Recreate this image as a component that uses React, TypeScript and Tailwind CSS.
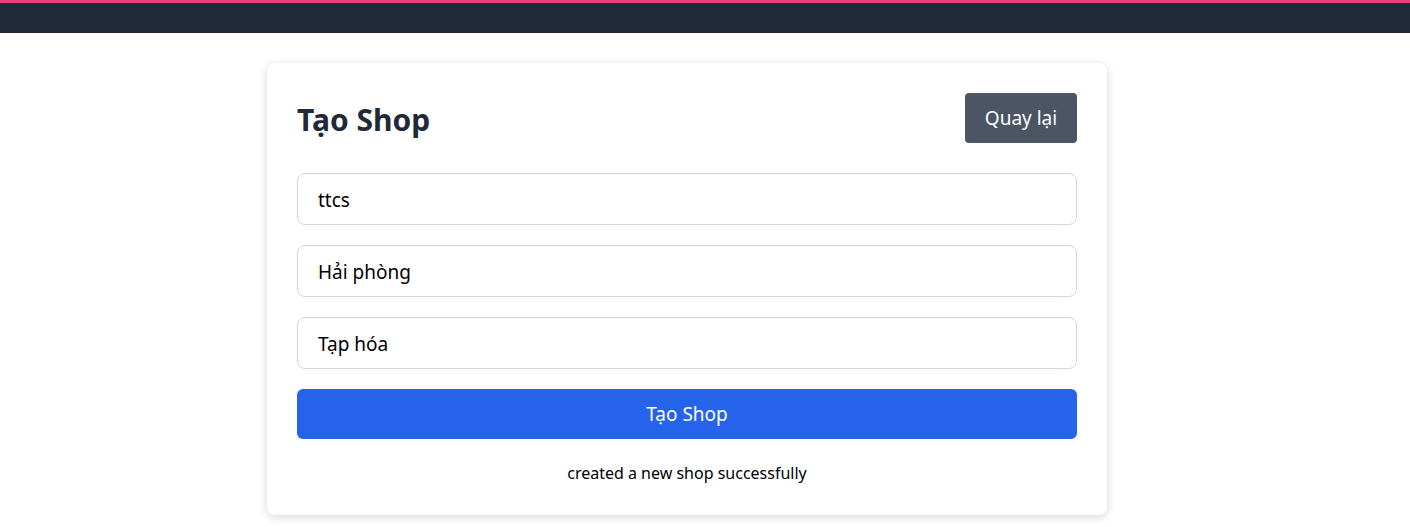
export default function App() {
  return (
    <div className="min-h-screen bg-white font-['Noto_Sans','Open_Sans',sans-serif] text-black">
      {/* ---------- Top bar ---------- */}
      <div className="h-[33px] border-t-[3px] border-[#ec407a] bg-[#1f2937]" />

      {/* ---------- Card ---------- */}
      <div className="flex justify-center pr-[36px] pt-[30px]">
        <div className="w-[840px] rounded-lg bg-white px-[30px] pt-[30px] pb-[30px] shadow-[0_2px_10px_rgba(0,0,0,0.16)]">
          <div className="flex h-[50px] items-center justify-between">
            <h1 className="pt-[2px] text-[30px] font-bold text-[#1f2937]">Tạo Shop</h1>
            <button
              type="button"
              className="h-[50px] w-[112px] rounded bg-[#4b5563] text-[19px] text-white"
            >
              Quay lại
            </button>
          </div>

          <form className="mt-[30px] flex flex-col gap-5" onSubmit={(e) => e.preventDefault()}>
            <input
              defaultValue="ttcs"
              className="h-[52px] w-full rounded-lg border border-[#d1d5db] px-5 pt-[2px] text-[19px] outline-none"
            />
            <input
              defaultValue="Hải phòng"
              className="h-[52px] w-full rounded-lg border border-[#d1d5db] px-5 pt-[2px] text-[19px] outline-none"
            />
            <input
              defaultValue="Tạp hóa"
              className="h-[52px] w-full rounded-lg border border-[#d1d5db] px-5 pt-[2px] text-[19px] outline-none"
            />
            <button
              type="submit"
              className="h-[50px] w-full rounded-md bg-[#2563eb] pt-[1px] text-[19px] text-white"
            >
              Tạo Shop
            </button>
          </form>

          <p className="mt-[22px] text-center text-[16px] leading-6">created a new shop successfully</p>
        </div>
      </div>
    </div>
  )
}
